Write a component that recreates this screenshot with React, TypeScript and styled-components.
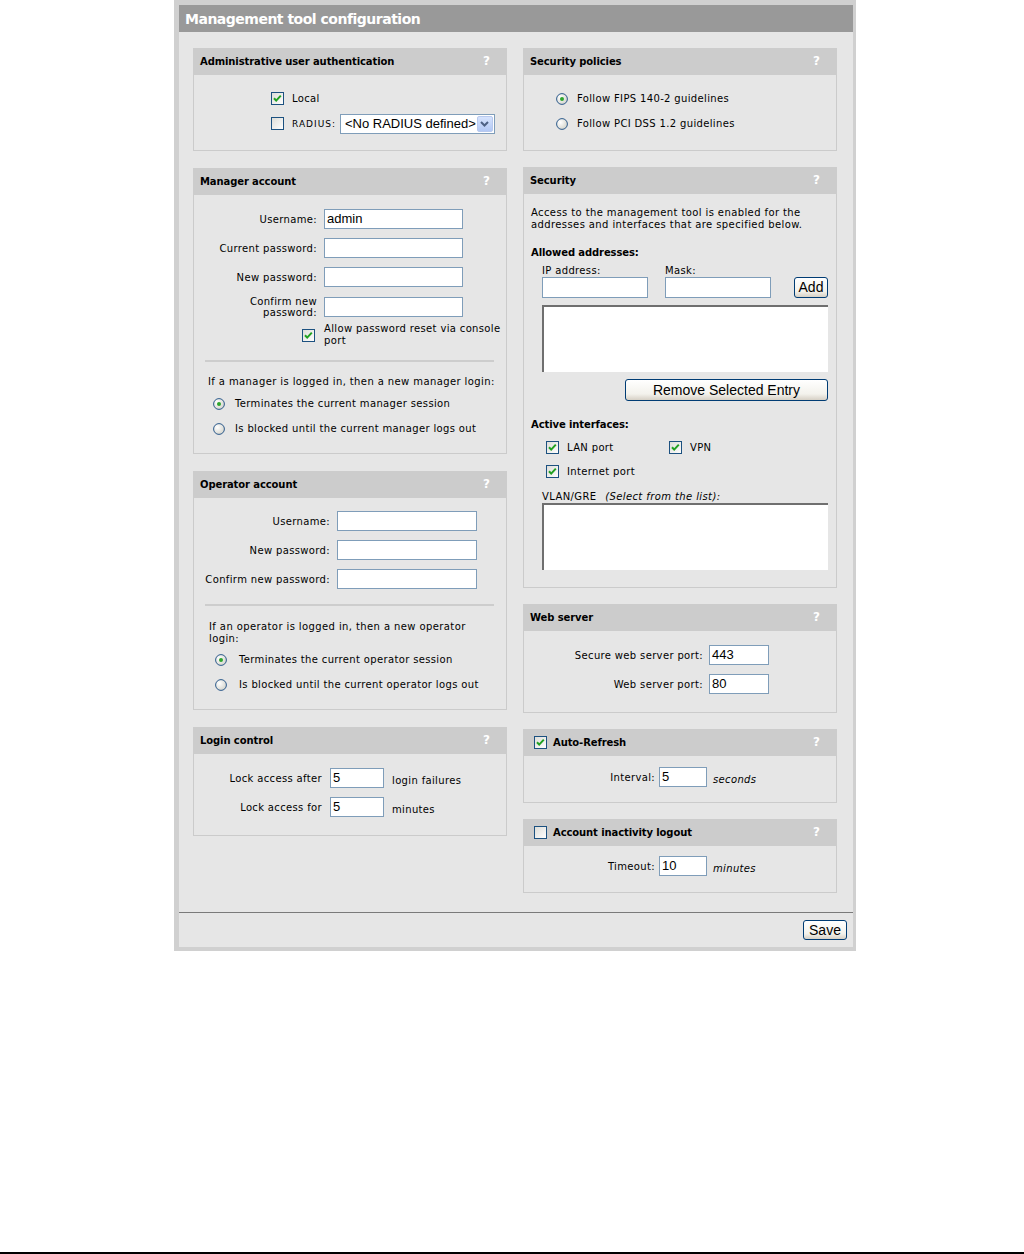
import React from 'react'
import styled, { createGlobalStyle } from 'styled-components'

const GlobalStyle = createGlobalStyle`
	html, body {
		margin: 0;
		padding: 0;
		background: #ffffff;
	}
	body {
		font-family: 'DejaVu Sans', Verdana, sans-serif;
		font-size: 10px;
		color: #000;
	}
`

const labelFont = `'DejaVu Sans', Verdana, sans-serif`
const fieldFont = `'Liberation Sans', Arial, sans-serif`

// page + frame
const Page = styled.div`
	width: 1024px;
	height: 1254px;
	display: flex;
	flex-direction: column;
`
const Frame = styled.div`
	margin-left: 174px;
	width: 682px;
	height: 951px;
	box-sizing: border-box;
	border: 5px solid #d0d0d0;
	border-right-width: 3px;
	border-bottom-width: 4px;
	background: #e6e6e6;
	display: flex;
	flex-direction: column;
`
const TitleBar = styled.div`
	height: 27px;
	flex: none;
	background: #999999;
	color: #fff;
	font-family: ${labelFont};
	font-weight: bold;
	font-size: 14px;
	line-height: 28px;
	padding-left: 6px;
	letter-spacing: -0.5px;
`
const Columns = styled.div`
	flex: 1;
	display: grid;
	grid-template-columns: 314px 314px;
	column-gap: 16px;
	padding: 16px 0 0 14px;
	align-items: start;
`
const Column = styled.div<{ $gap: number }>`
	display: flex;
	flex-direction: column;
	gap: ${(p) => p.$gap}px;
`
const Footer = styled.div`
	flex: none;
	height: 35px;
	box-sizing: border-box;
	border-top: 1px solid #7a7a7a;
	display: flex;
	justify-content: flex-end;
	align-items: flex-start;
	padding: 7px 6px 0 0;
`
const BottomRule = styled.div`
	margin-top: auto;
	height: 2px;
	background: #000;
`

// panels
const PanelBox = styled.section`
	display: flex;
	flex-direction: column;
`
const PanelHeader = styled.div`
	height: 27px;
	background: #cccccc;
	display: flex;
	align-items: center;
	padding: 0 17px 0 7px;
	font-family: ${labelFont};
	font-weight: bold;
	font-size: 10px;
`
const HeaderTitle = styled.span`
	flex: 1;
	display: flex;
	align-items: center;
	gap: 6px;
	letter-spacing: -0.1px;
`
const ToggleSlot = styled.span`
	margin-left: 4px;
	display: flex;
`
const HelpMark = styled.span`
	color: #fff;
	font-size: 12px;
	font-weight: bold;
	margin-top: -2px;
`
const PanelBody = styled.div<{ $h: number }>`
	height: ${(p) => p.$h}px;
	box-sizing: border-box;
	border: 1px solid #cbcbcb;
	border-top: none;
	display: flex;
	flex-direction: column;
`

// controls
const BoxSvg = styled.svg`
	flex: none;
	display: block;
`
const CheckBox = ({ checked }: { checked?: boolean }) => (
	<BoxSvg width="13" height="13" viewBox="0 0 13 13">
		<defs>
			<linearGradient id="cbg" x1="0" y1="0" x2="1" y2="1">
				<stop offset="0" stopColor="#dcdcd7" />
				<stop offset="1" stopColor="#ffffff" />
			</linearGradient>
		</defs>
		<rect x="0.5" y="0.5" width="12" height="12" fill="url(#cbg)" stroke="#1c5180" />
		{checked && (
			<path d="M3 6.2 L5.2 8.6 L9.8 3.6" fill="none" stroke="#21a121" strokeWidth="2" />
		)}
	</BoxSvg>
)
const Radio = ({ checked }: { checked?: boolean }) => (
	<BoxSvg width="12" height="12" viewBox="0 0 12 12">
		<defs>
			<radialGradient id="rbg" cx="0.35" cy="0.35" r="0.7">
				<stop offset="0" stopColor="#ffffff" />
				<stop offset="1" stopColor="#d4d4cc" />
			</radialGradient>
		</defs>
		<circle cx="6" cy="6" r="5.4" fill="url(#rbg)" stroke="#2c5a8c" strokeWidth="1" />
		{checked && <circle cx="6" cy="6" r="2" fill="#2ea52e" />}
	</BoxSvg>
)

const OptList = styled.div<{ $pl: number; $pt: number; $rowH: number }>`
	display: flex;
	flex-direction: column;
	padding: ${(p) => p.$pt}px 0 0 ${(p) => p.$pl}px;
	& > div {
		height: ${(p) => p.$rowH}px;
	}
`
const OptRow = styled.div<{ $gap?: number }>`
	display: flex;
	align-items: center;
	gap: ${(p) => p.$gap ?? 8}px;
`
const OptLabel = styled.span<{ $caps?: boolean }>`
	font-family: ${labelFont};
	font-size: ${(p) => (p.$caps ? '9px' : '10px')};
	letter-spacing: ${(p) => (p.$caps ? '1px' : '0.35px')};
	white-space: nowrap;
`
const SelectBox = styled.div`
	margin-left: -4px;
	width: 155px;
	height: 20px;
	box-sizing: border-box;
	border: 1px solid #7f9db9;
	background: #fff;
	display: flex;
	align-items: center;
	font-family: ${fieldFont};
	font-size: 13px;
	padding-left: 4px;
`
const SelectText = styled.span`
	flex: 1;
	white-space: nowrap;
`
const SelectArrow = styled.span`
	width: 16px;
	height: 16px;
	margin-right: 1px;
	background: linear-gradient(#d6e3fd, #b2c8f5);
	border: 1px solid #b8c9ee;
	box-sizing: border-box;
	border-radius: 2px;
	display: flex;
	align-items: center;
	justify-content: center;
`

const TextInput = styled.div<{ $w: number; $h?: number }>`
	width: ${(p) => p.$w}px;
	height: ${(p) => p.$h ?? 20}px;
	box-sizing: border-box;
	border: 1px solid #7f9db9;
	background: #fff;
	font-family: ${fieldFont};
	font-size: 13px;
	line-height: ${(p) => (p.$h ?? 20) - 2}px;
	padding-left: 2px;
`
const FormGrid = styled.div<{ $cols: string; $pt: number; $colGap?: number }>`
	display: grid;
	grid-template-columns: ${(p) => p.$cols};
	column-gap: ${(p) => p.$colGap ?? 7}px;
	row-gap: 9px;
	padding-top: ${(p) => p.$pt}px;
	align-items: center;
`
const FieldLabel = styled.span`
	font-family: ${labelFont};
	font-size: 10px;
	line-height: 11px;
	letter-spacing: 0.35px;
	text-align: right;
	white-space: nowrap;
`
const Suffix = styled.span<{ $italic?: boolean }>`
	font-family: ${labelFont};
	font-size: 10px;
	letter-spacing: 0.35px;
	font-style: ${(p) => (p.$italic ? 'italic' : 'normal')};
	white-space: nowrap;
	margin-top: 5px;
`
const ConsoleCheck = styled.div`
	justify-self: end;
	margin: -4px 2px 0 0;
`
const ConsoleLabel = styled.span`
	margin-top: -4px;
	width: 190px;
	font-family: ${labelFont};
	font-size: 10px;
	line-height: 12px;
	letter-spacing: 0.35px;
	white-space: nowrap;
`
const Separator = styled.div<{ $mt: number }>`
	height: 2px;
	background: #cdcdcd;
	margin: ${(p) => p.$mt}px 12px 0 11px;
`
const Note = styled.p<{ $mt: number; $pl: number }>`
	margin: ${(p) => p.$mt}px 0 0;
	padding-left: ${(p) => p.$pl}px;
	font-family: ${labelFont};
	font-size: 10px;
	line-height: 12px;
	letter-spacing: 0.4px;
	white-space: nowrap;
`
const Strong = styled(Note)`
	font-weight: bold;
	letter-spacing: -0.1px;
`
const SubBlock = styled.div<{ $mt?: number }>`
	margin: ${(p) => p.$mt ?? 0}px 0 0 18px;
	width: 286px;
	display: flex;
	flex-direction: column;
`
const AddrLabels = styled.div`
	display: grid;
	grid-template-columns: 123px 123px;
	font-family: ${labelFont};
	font-size: 10px;
	line-height: 12px;
	letter-spacing: 0.35px;
`
const AddrRow = styled.div`
	display: flex;
	align-items: center;
	gap: 17px;
`
const ListBox = styled.div<{ $mt: number }>`
	margin-top: ${(p) => p.$mt}px;
	height: 67px;
	box-sizing: border-box;
	background: #fff;
	border-top: 2px solid #6f6f6f;
	border-left: 2px solid #6f6f6f;
`
const Button = styled.button<{ $w: number; $h: number }>`
	width: ${(p) => p.$w}px;
	height: ${(p) => p.$h}px;
	padding: 0;
	border: 1px solid #003c74;
	border-radius: 3px;
	background: linear-gradient(#ffffff, #f3f2ec 70%, #d6d0c5);
	font-family: ${fieldFont};
	font-size: 14px;
	color: #000;
	line-height: ${(p) => p.$h - 2}px;
`
const PushRight = styled.div`
	margin-left: auto;
	display: flex;
`
const RightAlign = styled.div`
	display: flex;
	justify-content: flex-end;
	margin-top: 7px;
`
const IfaceGrid = styled.div`
	margin-top: 4px;
	padding-left: 22px;
	display: grid;
	grid-template-columns: 123px 123px;
	grid-auto-rows: 24px;
	align-items: center;
`
const Italic = styled.i`
	margin-left: 5px;
`
const InlineRow = styled.div<{ $pt: number; $labelW: number }>`
	display: grid;
	grid-template-columns: ${(p) => p.$labelW}px 48px auto;
	column-gap: 4px;
	padding-top: ${(p) => p.$pt}px;
	align-items: center;
	& > span:last-child {
		margin-left: 2px;
	}
`

type PanelProps = {
	title: string
	bodyH: number
	toggle?: 'on' | 'off'
	children?: React.ReactNode
}

const Panel = ({ title, bodyH, toggle, children }: PanelProps) => (
	<PanelBox>
		<PanelHeader>
			<HeaderTitle>
				{toggle && (
					<ToggleSlot>
						<CheckBox checked={toggle === 'on'} />
					</ToggleSlot>
				)}
				{title}
			</HeaderTitle>
			<HelpMark>?</HelpMark>
		</PanelHeader>
		<PanelBody $h={bodyH}>{children}</PanelBody>
	</PanelBox>
)

const App = () => {
	return (
		<>
			<GlobalStyle />
			<Page>
				<Frame>
					<TitleBar>Management tool configuration</TitleBar>
					<Columns>
						<Column $gap={17}>
							<Panel title="Administrative user authentication" bodyH={76}>
								<OptList $pl={77} $pt={11} $rowH={25}>
									<OptRow>
										<CheckBox checked />
										<OptLabel>Local</OptLabel>
									</OptRow>
									<OptRow>
										<CheckBox />
										<OptLabel $caps>RADIUS:</OptLabel>
										<SelectBox>
											<SelectText>&lt;No RADIUS defined&gt;</SelectText>
											<SelectArrow>
												<svg width="9" height="6" viewBox="0 0 9 6">
													<path d="M1 1 L4.5 4.5 L8 1" fill="none" stroke="#4d6185" strokeWidth="2" />
												</svg>
											</SelectArrow>
										</SelectBox>
									</OptRow>
								</OptList>
							</Panel>

							<Panel title="Manager account" bodyH={259}>
								<FormGrid $cols="123px 139px" $pt={14}>
									<FieldLabel>Username:</FieldLabel>
									<TextInput $w={139}>admin</TextInput>
									<FieldLabel>Current password:</FieldLabel>
									<TextInput $w={139} />
									<FieldLabel>New password:</FieldLabel>
									<TextInput $w={139} />
									<FieldLabel>
										Confirm new
										<br />
										password:
									</FieldLabel>
									<TextInput $w={139} />
									<ConsoleCheck>
										<CheckBox checked />
									</ConsoleCheck>
									<ConsoleLabel>
										Allow password reset via console
										<br />
										port
									</ConsoleLabel>
								</FormGrid>
								<Separator $mt={13} />
								<Note $mt={14} $pl={14}>
									If a manager is logged in, then a new manager login:
								</Note>
								<OptList $pl={19} $pt={3} $rowH={25}>
									<OptRow $gap={10}>
										<Radio checked />
										<OptLabel>Terminates the current manager session</OptLabel>
									</OptRow>
									<OptRow $gap={10}>
										<Radio />
										<OptLabel>Is blocked until the current manager logs out</OptLabel>
									</OptRow>
								</OptList>
							</Panel>

							<Panel title="Operator account" bodyH={212}>
								<FormGrid $cols="136px 140px" $pt={13}>
									<FieldLabel>Username:</FieldLabel>
									<TextInput $w={140} />
									<FieldLabel>New password:</FieldLabel>
									<TextInput $w={140} />
									<FieldLabel>Confirm new password:</FieldLabel>
									<TextInput $w={140} />
								</FormGrid>
								<Separator $mt={15} />
								<Note $mt={15} $pl={15}>
									If an operator is logged in, then a new operator
									<br />
									login:
								</Note>
								<OptList $pl={21} $pt={2} $rowH={25}>
									<OptRow $gap={12}>
										<Radio checked />
										<OptLabel>Terminates the current operator session</OptLabel>
									</OptRow>
									<OptRow $gap={12}>
										<Radio />
										<OptLabel>Is blocked until the current operator logs out</OptLabel>
									</OptRow>
								</OptList>
							</Panel>

							<Panel title="Login control" bodyH={82}>
								<FormGrid $cols="128px 54px auto" $pt={14} $colGap={8}>
									<FieldLabel>Lock access after</FieldLabel>
									<TextInput $w={54}>5</TextInput>
									<Suffix>login failures</Suffix>
									<FieldLabel>Lock access for</FieldLabel>
									<TextInput $w={54}>5</TextInput>
									<Suffix>minutes</Suffix>
								</FormGrid>
							</Panel>
						</Column>

						<Column $gap={16}>
							<Panel title="Security policies" bodyH={76}>
								<OptList $pl={32} $pt={11} $rowH={25}>
									<OptRow $gap={9}>
										<Radio checked />
										<OptLabel>Follow FIPS 140-2 guidelines</OptLabel>
									</OptRow>
									<OptRow $gap={9}>
										<Radio />
										<OptLabel>Follow PCI DSS 1.2 guidelines</OptLabel>
									</OptRow>
								</OptList>
							</Panel>

							<Panel title="Security" bodyH={394}>
								<Note $mt={13} $pl={7}>
									Access to the management tool is enabled for the
									<br />
									addresses and interfaces that are specified below.
								</Note>
								<Strong $mt={16} $pl={7}>
									Allowed addresses:
								</Strong>
								<SubBlock $mt={6}>
									<AddrLabels>
										<span>IP address:</span>
										<span>Mask:</span>
									</AddrLabels>
									<AddrRow>
										<TextInput $w={106} $h={21} />
										<TextInput $w={106} $h={21} />
										<PushRight>
											<Button $w={34} $h={21}>
												Add
											</Button>
										</PushRight>
									</AddrRow>
									<ListBox $mt={7} />
									<RightAlign>
										<Button $w={203} $h={22}>
											Remove Selected Entry
										</Button>
									</RightAlign>
								</SubBlock>
								<Strong $mt={18} $pl={7}>
									Active interfaces:
								</Strong>
								<IfaceGrid>
									<OptRow>
										<CheckBox checked />
										<OptLabel>LAN port</OptLabel>
									</OptRow>
									<OptRow>
										<CheckBox checked />
										<OptLabel>VPN</OptLabel>
									</OptRow>
									<OptRow>
										<CheckBox checked />
										<OptLabel>Internet port</OptLabel>
									</OptRow>
								</IfaceGrid>
								<SubBlock $mt={8}>
									<Note $mt={0} $pl={0}>
										VLAN/GRE <Italic>(Select from the list):</Italic>
									</Note>
									<ListBox $mt={0} />
								</SubBlock>
							</Panel>

							<Panel title="Web server" bodyH={82}>
								<FormGrid $cols="179px 60px" $pt={14} $colGap={6}>
									<FieldLabel>Secure web server port:</FieldLabel>
									<TextInput $w={60}>443</TextInput>
									<FieldLabel>Web server port:</FieldLabel>
									<TextInput $w={60}>80</TextInput>
								</FormGrid>
							</Panel>

							<Panel title="Auto-Refresh" bodyH={47} toggle="on">
								<InlineRow $pt={11} $labelW={131}>
									<FieldLabel>Interval:</FieldLabel>
									<TextInput $w={48}>5</TextInput>
									<Suffix $italic>seconds</Suffix>
								</InlineRow>
							</Panel>

							<Panel title="Account inactivity logout" bodyH={47} toggle="off">
								<InlineRow $pt={10} $labelW={131}>
									<FieldLabel>Timeout:</FieldLabel>
									<TextInput $w={48}>10</TextInput>
									<Suffix $italic>minutes</Suffix>
								</InlineRow>
							</Panel>
						</Column>
					</Columns>
					<Footer>
						<Button $w={44} $h={20}>
							Save
						</Button>
					</Footer>
				</Frame>
				<BottomRule />
			</Page>
		</>
	)
}

export default App
